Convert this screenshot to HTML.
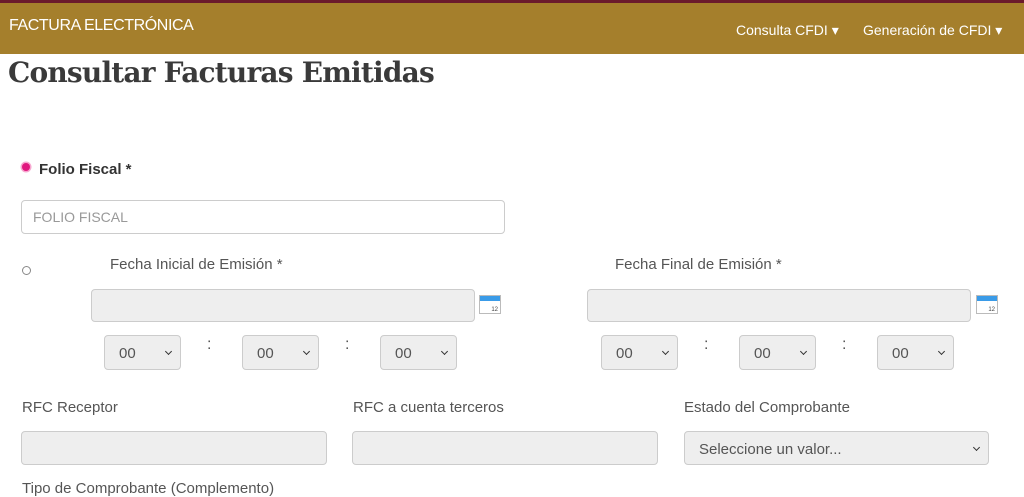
<!DOCTYPE html>
<html><head><meta charset="utf-8"><style>
body{margin:0;width:1024px;height:488px;overflow:hidden;background:#fff;font-family:"Liberation Sans",sans-serif;color:#333;position:relative}
.a{position:absolute}
.nav{left:0;top:0;width:1024px;height:54px;background:#a57f2c;border-top:3px solid #6b1a2c;box-sizing:border-box}
.lbl{font-size:15px;color:#555}
.inp{background:#eee;border:1px solid #ccc;border-radius:4px;box-sizing:border-box}
.sel{background:#eee;border:1px solid #ccc;border-radius:4px;box-sizing:border-box;width:77px;height:35px;font-size:15px;color:#555;padding:9px 0 0 14px}
.sel:after{content:"";position:absolute;right:9px;top:13px;width:4px;height:4px;border-right:1.5px solid #333;border-bottom:1.5px solid #333;transform:rotate(45deg)}
.cal{width:22px;height:19px;border:1px solid #bbb;background:#fff;box-sizing:border-box}
.cal:before{content:"";position:absolute;left:0;top:0;width:20px;height:5px;background:#3a9be8}
.cal:after{content:"12";position:absolute;right:2px;bottom:0;font-size:6px;color:#444}
.col{font-size:16px;color:#555}
</style></head><body>
<div class="a nav"></div>
<div class="a" style="left:9px;top:17px;font-size:16px;color:#fff;letter-spacing:-0.4px">FACTURA ELECTRÓNICA</div>
<div class="a" style="left:736px;top:22px;font-size:14px;color:#fff">Consulta CFDI ▾</div>
<div class="a" style="left:863px;top:22px;font-size:14px;color:#fff">Generación de CFDI ▾</div>
<div class="a" style="left:8px;top:56px;font-family:'DejaVu Serif','Liberation Serif',serif;font-weight:bold;font-size:28px;color:#3a3a3a;letter-spacing:-0.8px">Consultar Facturas Emitidas</div>
<div class="a" style="left:22px;top:163px;width:8px;height:8px;border-radius:50%;background:#e0187f;box-shadow:0 0 0 1.5px #f7a8d0"></div>
<div class="a" style="left:39px;top:161px;font-size:15px;font-weight:bold;color:#333">Folio Fiscal *</div>
<div class="a" style="left:21px;top:200px;width:484px;height:34px;border:1px solid #ccc;border-radius:4px;box-sizing:border-box;font-size:14px;color:#999;padding:8px 0 0 11px">FOLIO FISCAL</div>
<div class="a" style="left:22px;top:266px;width:9px;height:9px;border-radius:50%;border:1px solid #888;box-sizing:border-box"></div>
<div class="a lbl" style="left:110px;top:256px">Fecha Inicial de Emisión *</div>
<div class="a lbl" style="left:615px;top:256px">Fecha Final de Emisión *</div>
<div class="a inp" style="left:91px;top:289px;width:384px;height:33px"></div>
<div class="a inp" style="left:587px;top:289px;width:384px;height:33px"></div>
<div class="a cal" style="left:479px;top:295px"></div>
<div class="a cal" style="left:976px;top:295px"></div>
<div class="a sel" style="left:104px;top:335px">00</div>
<div class="a sel" style="left:242px;top:335px">00</div>
<div class="a sel" style="left:380px;top:335px">00</div>
<div class="a sel" style="left:601px;top:335px">00</div>
<div class="a sel" style="left:739px;top:335px">00</div>
<div class="a sel" style="left:877px;top:335px">00</div>
<div class="a col" style="left:207px;top:336px">:</div>
<div class="a col" style="left:345px;top:336px">:</div>
<div class="a col" style="left:704px;top:336px">:</div>
<div class="a col" style="left:842px;top:336px">:</div>
<div class="a lbl" style="left:22px;top:399px">RFC Receptor</div>
<div class="a lbl" style="left:353px;top:399px">RFC a cuenta terceros</div>
<div class="a lbl" style="left:684px;top:399px">Estado del Comprobante</div>
<div class="a inp" style="left:21px;top:431px;width:306px;height:34px"></div>
<div class="a inp" style="left:352px;top:431px;width:306px;height:34px"></div>
<div class="a sel" style="left:684px;top:431px;width:305px;height:34px;font-size:15px;padding-left:14px">Seleccione un valor...</div>
<div class="a lbl" style="left:22px;top:480px">Tipo de Comprobante (Complemento)</div>
</body></html>
